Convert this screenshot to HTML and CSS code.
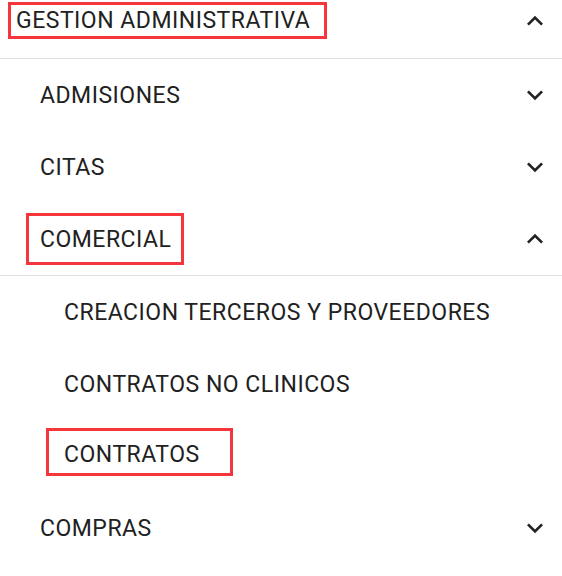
FILE: index.html
```html
<!DOCTYPE html>
<html lang="es">
<head>
<meta charset="utf-8">
<link rel="stylesheet" href="styles.css">
</head>
<body>
<nav class="menu">
  <div class="group-header">
    <span class="label mark mark-top">GESTION ADMINISTRATIVA</span>
    <svg class="chev" viewBox="0 0 24 24"><path d="M7.41 15.41L12 10.83l4.59 4.58L18 14l-6-6-6 6z"/></svg>
  </div>
  <div class="row lvl1">
    <span class="label">ADMISIONES</span>
    <svg class="chev" viewBox="0 0 24 24"><path d="M16.59 8.59L12 13.17 7.41 8.59 6 10l6 6 6-6z"/></svg>
  </div>
  <div class="row lvl1">
    <span class="label">CITAS</span>
    <svg class="chev" viewBox="0 0 24 24"><path d="M16.59 8.59L12 13.17 7.41 8.59 6 10l6 6 6-6z"/></svg>
  </div>
  <div class="row lvl1 open">
    <span class="label mark mark-mid">COMERCIAL</span>
    <svg class="chev" viewBox="0 0 24 24"><path d="M7.41 15.41L12 10.83l4.59 4.58L18 14l-6-6-6 6z"/></svg>
  </div>
  <div class="row lvl2">
    <span class="label">CREACION TERCEROS Y PROVEEDORES</span>
  </div>
  <div class="row lvl2">
    <span class="label">CONTRATOS NO CLINICOS</span>
  </div>
  <div class="row lvl2">
    <span class="label mark mark-low">CONTRATOS</span>
  </div>
  <div class="row lvl1">
    <span class="label">COMPRAS</span>
    <svg class="chev" viewBox="0 0 24 24"><path d="M16.59 8.59L12 13.17 7.41 8.59 6 10l6 6 6-6z"/></svg>
  </div>
</nav>
</body>
</html>
```

FILE: styles.css
```css
html, body {
  margin: 0;
  padding: 0;
  background: #ffffff;
}

.menu {
  width: 562px;
  font-family: Roboto, "Liberation Sans", sans-serif;
  font-size: 23px;
  letter-spacing: 0.5px;
  color: #212121;
}

.group-header {
  display: flex;
  align-items: center;
  height: 41px;
  padding: 0 11px 17px 16px;
  border-bottom: 1px solid #e0e0e0;
}

.row {
  display: flex;
  align-items: center;
  height: 72px;
  padding-right: 11px;
}

.row.open {
  border-bottom: 1px solid #e0e0e0;
}

.lvl1 {
  padding-left: 40px;
}

.lvl2 {
  padding-left: 64px;
}

.label {
  flex: 1 1 auto;
  line-height: 26px;
  padding-top: 2px;
  white-space: nowrap;
}

.chev {
  flex: 0 0 32px;
  width: 32px;
  height: 32px;
  fill: #222222;
}

.mark {
  box-sizing: border-box;
  flex: 0 0 auto;
  margin-right: auto;
  border: 3px solid #f5363c;
}

.mark-top {
  width: 319px;
  margin-left: -8px;
  padding: 3px 0 2px 5px;
}

.mark-mid {
  width: 158px;
  margin-left: -14px;
  padding: 11px 0 9px 11px;
}

.mark-low {
  width: 187px;
  margin-left: -18px;
  margin-bottom: 8px;
  padding: 11px 0 5px 15px;
}
```
